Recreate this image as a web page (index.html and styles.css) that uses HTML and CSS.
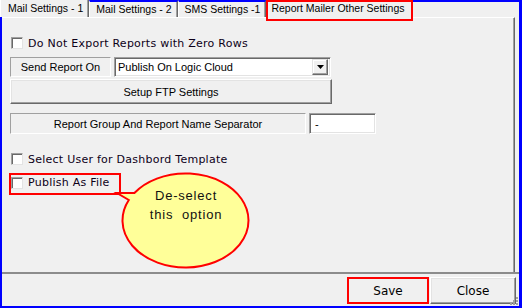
FILE: index.html
```html
<!DOCTYPE html>
<html>
<head>
<meta charset="utf-8">
<link rel="stylesheet" href="styles.css">
</head>
<body>
<div class="window">
  <div class="tabs">
    <div class="tab tab-first">Mail Settings - 1</div>
    <div class="tab">Mail Settings - 2</div>
    <div class="tab">SMS Settings -1</div>
    <div class="tab tab-active">Report Mailer Other Settings</div>
    <div class="tab-fill"></div>
  </div>
  <div class="panel">
    <label class="check-row row-zero"><span class="checkbox"></span><span>Do Not Export Reports with Zero Rows</span></label>
    <div class="field-row row-send">
      <div class="caption caption-send">Send Report On</div>
      <div class="combo">
        <span class="combo-text">Publish On Logic Cloud</span>
        <span class="combo-btn"><svg width="7" height="4" viewBox="0 0 7 4"><polygon points="0,0 7,0 3.5,4" fill="#000"/></svg></span>
      </div>
    </div>
    <div class="button ftp-btn">Setup FTP Settings</div>
    <div class="field-row row-sep">
      <div class="caption caption-sep">Report Group And Report Name Separator</div>
      <div class="textbox">-</div>
    </div>
    <label class="check-row row-dash"><span class="checkbox"></span><span>Select User for Dashbord Template</span></label>
    <label class="check-row row-publish"><span class="checkbox"></span><span>Publish As File</span></label>
  </div>
  <div class="footer">
    <button class="button footer-btn save">Save</button>
    <button class="button footer-btn close">Close</button>
  </div>
  <div class="callout">
    <svg class="callout-shape" width="145" height="110" viewBox="110 165 145 110">
      <path d="M134.4 193 L117 193 L128.8 200 A63 47 0 1 0 134.4 193 Z" fill="#ffff99" stroke="#ff0000" stroke-width="2" stroke-linejoin="miter"/>
    </svg>
    <span class="callout-text">De-select</span>
    <span class="callout-text">this&nbsp;&nbsp;option</span>
  </div>
  <svg class="grip" width="10" height="10" viewBox="0 0 10 10">
    <rect x="7" y="1" width="2" height="2" fill="#a0a0a0"/>
    <rect x="4" y="4" width="2" height="2" fill="#a0a0a0"/>
    <rect x="7" y="4" width="2" height="2" fill="#a0a0a0"/>
    <rect x="1" y="7" width="2" height="2" fill="#a0a0a0"/>
    <rect x="4" y="7" width="2" height="2" fill="#a0a0a0"/>
    <rect x="7" y="7" width="2" height="2" fill="#a0a0a0"/>
  </svg>
</div>
</body>
</html>
```

FILE: styles.css
```css
* { box-sizing: border-box; }

body {
  margin: 0;
  background: #f0f0f0;
}

.window {
  width: 522px;
  height: 308px;
  border: solid #0000ff;
  border-width: 0 3px 2px 2px;
  background: #f0f0f0;
  display: flex;
  flex-direction: column;
  position: relative;
  font-family: "Liberation Sans", Arial, sans-serif;
  font-size: 11px;
  color: #000;
}

/* tabs */
.tabs {
  display: flex;
  align-items: flex-start;
  height: 17px;
  flex: none;
}

.tab {
  height: 17px;
  border-top: 2px solid #0000ff;
  border-left: 1px solid #fff;
  border-right: 1px solid #696969;
  box-shadow: inset -1px 0 #a0a0a0;
  padding: 0 5px 0 6px;
  font-size: 10.5px;
  line-height: 15px;
  white-space: nowrap;
  background: #f0f0f0;
}

.tab-first {
  margin-left: -2px;
  border-top: 0;
  line-height: 17px;
  padding-left: 7px;
}

.tab-active {
  height: 21px;
  border: 2px solid #ff0000;
  padding: 0 6px 0 3px;
  line-height: 13px;
  position: relative;
  z-index: 1;
  box-shadow: none;
}

.tab-fill {
  flex: 1;
  height: 17px;
  border-top: 2px solid #0000ff;
}

/* panel */
.panel {
  flex: 1;
  border-top: 1px solid #fff;
  border-right: 1px solid #696969;
  box-shadow: inset -1px 0 #a0a0a0;
  margin-right: 4px;
  padding-left: 8px;
  display: flex;
  flex-direction: column;
  align-items: flex-start;
}

.check-row {
  display: flex;
  align-items: center;
  gap: 5px;
  height: 12px;
  margin-left: 1px;
  font-family: "DejaVu Sans", Verdana, sans-serif;
  font-size: 11px;
  letter-spacing: 0.25px;
  white-space: nowrap;
  color: #0d0018;
}

.checkbox {
  flex: none;
  width: 12px;
  height: 12px;
  background: #fff;
  border: 1px solid;
  border-color: #a0a0a0 #e3e3e3 #e3e3e3 #a0a0a0;
  box-shadow: inset 1px 1px #696969;
}

.row-zero { margin-top: 19px; }
.row-dash { margin-top: 19px; }

.row-publish {
  height: auto;
  margin-top: 8px;
  margin-left: -1px;
  border: 2px solid #ff0000;
  padding: 1px 9px 4px 0;
}

.field-row {
  display: flex;
  gap: 3px;
}

.row-send {
  margin-top: 8px;
  height: 20px;
}

.row-sep {
  margin-top: 9px;
  height: 21px;
}

.caption {
  border: 1px solid;
  border-color: #a0a0a0 #fff #fff #a0a0a0;
  display: flex;
  align-items: center;
  justify-content: center;
  white-space: nowrap;
}

.caption-send { width: 101px; }
.caption-sep { width: 296px; }

.combo {
  width: 217px;
  height: 20px;
  background: #fff;
  border: 1px solid;
  border-color: #a0a0a0 #fff #fff #a0a0a0;
  box-shadow: inset 1px 1px #696969, inset -1px -1px #e3e3e3;
  display: flex;
  align-items: center;
  padding: 2px 2px 2px 3px;
}

.combo-text {
  flex: 1;
  white-space: nowrap;
}

.combo-btn {
  width: 16px;
  height: 16px;
  background: #f0f0f0;
  border: 1px solid;
  border-color: #e3e3e3 #696969 #696969 #e3e3e3;
  box-shadow: inset -1px -1px #a0a0a0, inset 1px 1px #fff;
  display: flex;
  align-items: center;
  justify-content: center;
}

.textbox {
  width: 67px;
  height: 21px;
  background: #fff;
  border: 1px solid;
  border-color: #a0a0a0 #fff #fff #a0a0a0;
  box-shadow: inset 1px 1px #696969, inset -1px -1px #e3e3e3;
  display: flex;
  align-items: center;
  padding-left: 5px;
}

.button {
  background: #f0f0f0;
  border: 1px solid;
  border-color: #fff #696969 #696969 #fff;
  box-shadow: inset -1px -1px #a0a0a0, inset 1px 1px #e3e3e3;
  display: flex;
  align-items: center;
  justify-content: center;
  font-family: "Liberation Sans", Arial, sans-serif;
  font-size: 11px;
  color: #000;
  padding: 0;
  margin: 0;
}

.ftp-btn {
  width: 322px;
  height: 25px;
  margin-top: 2px;
}

/* footer */
.footer {
  flex: none;
  height: 34px;
  border-top: 2px solid #8c8c8c;
  display: flex;
  justify-content: flex-end;
  align-items: flex-start;
  gap: 1px;
  padding: 3px 3px 0 0;
}

.footer-btn {
  height: 27px;
  font-family: "DejaVu Sans", Verdana, sans-serif;
  font-size: 12px;
}

.save {
  width: 82px;
  outline: 2px solid #ff0000;
  outline-offset: -2px;
}

.close { width: 86px; }

/* annotation callout */
.callout {
  position: absolute;
  left: 108px;
  top: 165px;
  width: 145px;
  height: 110px;
  display: flex;
  flex-direction: column;
  align-items: center;
  padding: 21px 0 0 7px;
  z-index: 2;
}

.callout-shape {
  position: absolute;
  left: 0;
  top: 0;
}

.callout-text {
  position: relative;
  font-family: "Liberation Sans", Arial, sans-serif;
  font-size: 13px;
  letter-spacing: 0.8px;
  line-height: 19px;
  color: #111;
  white-space: nowrap;
}

.grip {
  position: absolute;
  right: 0;
  bottom: 0;
}
```
